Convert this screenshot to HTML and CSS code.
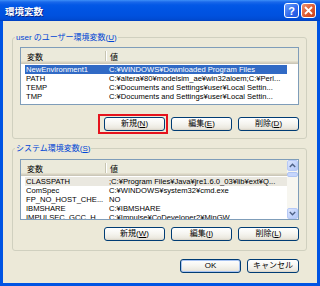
FILE: index.html
```html
<!DOCTYPE html>
<html lang="ja">

<head>
    <meta charset="UTF-8">
    <title>環境変数</title>
    <link rel="stylesheet" href="styles.css">
</head>

<body>

    <div class="window">
        <div class="titlebar">
            <span class="title">環境変数</span>
            <span class="tb-btn help">?</span>
            <span class="tb-btn close">
                <svg width="9" height="9" viewBox="0 0 9 9"><path d="M1 1L8 8M8 1L1 8" stroke="#fff" stroke-width="1.8" /></svg>
            </span>
        </div>

        <div class="frame">
            <fieldset class="group">
                <legend>user のユーザー環境変数(<u>U</u>)</legend>
                <div class="list">
                    <div class="rows-col">
                        <div class="head">
                            <span class="c1">変数</span><span class="sep"></span><span class="c2">値</span>
                        </div>
                        <div class="rows">
                            <div class="row sel"><span class="c1">NewEnvironment1</span><span class="c2">C:¥WINDOWS¥Downloaded Program Files</span></div>
                            <div class="row"><span class="c1">PATH</span><span class="c2">C:¥altera¥80¥modelsim_ae¥win32aloem;C:¥Perl...</span></div>
                            <div class="row"><span class="c1">TEMP</span><span class="c2">C:¥Documents and Settings¥user¥Local Settin...</span></div>
                            <div class="row"><span class="c1">TMP</span><span class="c2">C:¥Documents and Settings¥user¥Local Settin...</span></div>
                        </div>
                    </div>
                </div>
                <div class="btns">
                    <span class="mark"><button class="btn">新規(<u>N</u>)</button></span>
                    <button class="btn">編集(<u>E</u>)</button>
                    <button class="btn">削除(<u>D</u>)</button>
                </div>
            </fieldset>

            <fieldset class="group sys">
                <legend>システム環境変数(<u>S</u>)</legend>
                <div class="list sys-list">
                    <div class="rows-col">
                        <div class="head">
                            <span class="c1">変数</span><span class="sep"></span><span class="c2">値</span>
                        </div>
                        <div class="rows">
                            <div class="row dim"><span class="c1">CLASSPATH</span><span class="c2">;C:¥Program Files¥Java¥jre1.6.0_03¥lib¥ext¥Q...</span></div>
                            <div class="row"><span class="c1">ComSpec</span><span class="c2">C:¥WINDOWS¥system32¥cmd.exe</span></div>
                            <div class="row"><span class="c1">FP_NO_HOST_CHE...</span><span class="c2">NO</span></div>
                            <div class="row"><span class="c1">IBMSHARE</span><span class="c2">C:¥IBMSHARE</span></div>
                            <div class="row"><span class="c1">IMPULSEC_GCC_H</span><span class="c2">C:¥Impulse¥CoDeveloper2¥MinGW</span></div>
                        </div>
                    </div>
                    <div class="vscroll">
                        <span class="sb-btn">
                            <svg width="7" height="5" viewBox="0 0 7 5"><path d="M0.8 4L3.5 1.3L6.2 4" fill="none" stroke="#4D6185" stroke-width="1.4" /></svg>
                        </span>
                        <span class="thumb"></span>
                        <span class="track"></span>
                        <span class="sb-btn">
                            <svg width="7" height="5" viewBox="0 0 7 5"><path d="M0.8 1L3.5 3.7L6.2 1" fill="none" stroke="#4D6185" stroke-width="1.4" /></svg>
                        </span>
                    </div>
                </div>
                <div class="btns">
                    <button class="btn">新規(<u>W</u>)</button>
                    <button class="btn">編集(<u>I</u>)</button>
                    <button class="btn">削除(<u>L</u>)</button>
                </div>
            </fieldset>

            <div class="footer">
                <button class="btn default">OK</button>
                <button class="btn cancel">キャンセル</button>
            </div>
        </div>
    </div>

</body>

</html>
```

FILE: styles.css
```css
* {
    box-sizing: border-box;
}

body {
    margin: 0;
    font-family: "Liberation Sans", "Noto Sans CJK JP", sans-serif;
    font-size: 8px;
    color: #000;
}

.window {
    width: 320px;
    height: 286px;
    display: flex;
    flex-direction: column;
}

/* title bar */
.titlebar {
    height: 21px;
    flex: none;
    display: flex;
    align-items: center;
    gap: 2px;
    padding: 0 4px 0 5px;
    background: linear-gradient(180deg, #3d8ff8 0, #1a68ea 2px, #0358e6 5px, #0054e3 45%, #0051de 75%, #004bd3 92%, #003fbd 100%);
}

.title {
    flex: 1;
    color: #fff;
    font-weight: bold;
    font-size: 9.5px;
    text-shadow: 1px 1px #0a1f80;
}

.tb-btn {
    width: 15px;
    height: 15px;
    border: 1px solid #fff;
    border-radius: 3px;
    display: flex;
    align-items: center;
    justify-content: center;
    color: #fff;
    font-weight: bold;
    font-size: 11px;
}

.help {
    background: linear-gradient(135deg, #6b9ffc, #2d66ec 60%, #2158dc);
}

.close {
    background: linear-gradient(135deg, #ec9273, #dd5a31 55%, #c8401a);
}

/* window body */
.frame {
    flex: 1;
    display: flex;
    flex-direction: column;
    background: #ece9d8;
    border: 3px solid #0054e3;
    border-top: 0;
    padding: 11px 10px 0 9px;
}

.group {
    margin: 0;
    min-width: 0;
    padding: 4px 7px 7px;
    border: 1px solid #d0d0bf;
    border-radius: 3px;
}

.group legend {
    margin-left: -5px;
    padding: 0 1px;
    line-height: 11px;
    color: #0046d5;
}

.group.sys {
    margin-top: 4px;
    padding: 5px 7px 9px;
}

/* list views */
.list {
    height: 58px;
    display: flex;
    background: #fff;
    border: 1px solid #7f9db9;
    overflow: hidden;
}

.sys-list {
    height: 61px;
}

.rows-col {
    flex: 1;
    min-width: 0;
}

.head {
    height: 16px;
    display: flex;
    align-items: center;
    background: #ebeadb;
    box-shadow: inset 0 -1px #cbc7b8, inset 0 -2px #d6d2c2, inset 0 -3px #e2decd;
    white-space: nowrap;
}

.head .c1 {
    width: 84px;
    padding-left: 6px;
}

.sep {
    width: 1px;
    height: 10px;
    background: #c7c5b2;
    box-shadow: 1px 0 #fff;
}

.head .c2 {
    padding-left: 4px;
}

.rows {
    padding-top: 1px;
    font-size: 7.6px;
}

.row {
    display: flex;
    width: 262px;
    height: 9px;
    line-height: 9px;
    margin-left: 4px;
    white-space: nowrap;
}

.row .c1 {
    width: 80px;
    padding-left: 1px;
    overflow: hidden;
}

.row .c2 {
    flex: 1;
    padding-left: 4px;
    overflow: hidden;
}

.row.sel {
    background: #316ac5;
    color: #fff;
}

.row.dim {
    background: #eae8e0;
}

/* scrollbar */
.vscroll {
    width: 11px;
    flex: none;
    display: flex;
    flex-direction: column;
    background: #f7f6f0;
}

.sb-btn {
    height: 11px;
    display: flex;
    align-items: center;
    justify-content: center;
    background: linear-gradient(135deg, #dce6fd, #c1d3fb 60%, #b4c8f6);
    border: 1px solid #b6c9f6;
    border-radius: 2px;
}

.thumb {
    height: 5px;
    margin-top: 1px;
    background: #c6d6fc;
    border: 1px solid #b0c5f4;
    border-radius: 2px;
}

.track {
    flex: 1;
}

/* buttons */
.btns {
    display: flex;
    justify-content: flex-end;
    gap: 6px;
    margin-top: 12px;
}

.sys .btns {
    margin-top: 7px;
}

.btn {
    width: 61px;
    height: 14px;
    padding: 0;
    font: inherit;
    line-height: 12px;
    color: #000;
    border: 1px solid #003c74;
    border-radius: 3px;
    background: linear-gradient(180deg, #fff 0, #f5f4ef 50%, #ebe8df 85%, #d8d2c6 100%);
}

/* red annotation box round the first button */
.mark {
    display: flex;
    border: 2px solid #e5131d;
    padding: 1px 1px 1px 4px;
    margin: -3px -3px -3px -6px;
}

.btn.default {
    box-shadow: inset 0 0 0 1px #a9c4f2;
}

.btn.cancel {
    width: 52px;
}

.footer {
    display: flex;
    justify-content: flex-end;
    gap: 6px;
    margin: 8px 8px 0 0;
}
```
